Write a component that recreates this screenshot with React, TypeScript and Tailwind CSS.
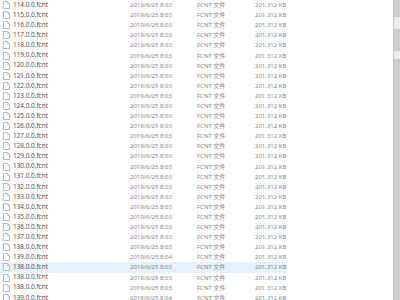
import React from 'react';

type FileRow = {
  name: string;
  time: string;
  selected?: boolean;
};

const rows: FileRow[] = [
  ...Array.from({ length: 26 }, (_, i) => ({
    name: `${114 + i}.0.0.fcnt`,
    time: 114 + i === 139 ? '2019/6/25 8:04' : '2019/6/25 8:03',
  })),
  { name: '138.0.0.fcnt', time: '2019/6/25 8:03', selected: true },
  { name: '138.0.0.fcnt', time: '2019/6/25 8:03' },
  { name: '138.0.0.fcnt', time: '2019/6/25 8:03' },
  { name: '139.0.0.fcnt', time: '2019/6/25 8:04' },
];

const FileIcon = () => (
  <svg width="7" height="8" viewBox="0 0 7 8" className="shrink-0">
    <path d="M0.5 0.5 H4.5 L6.5 2.5 V7.5 H0.5 Z" fill="#fff" stroke="#b4b4b4" strokeWidth="1" />
    <path d="M4.5 0.5 V2.5 H6.5" fill="none" stroke="#cfcfcf" strokeWidth="1" />
  </svg>
);

const App: React.FC = () => {
  return (
    <div
      className="flex w-[400px] h-[300px] overflow-hidden bg-white"
      style={{ fontFamily: '"Noto Sans", "Noto Sans CJK SC", sans-serif' }}
    >
      <div className="flex-1 flex flex-col">
        {rows.map((row, i) => (
          <div
            key={i}
            className={`flex items-center h-[10.1px] shrink-0 w-[287px] ${row.selected ? 'bg-[#e5f1fb]' : ''}`}
          >
            <div className="w-[13px] pl-[3px] flex items-center">
              <FileIcon />
            </div>
            <div className="w-[117px] text-[6.4px] leading-none text-[#505050]">{row.name}</div>
            <div className="w-[67px] text-[6px] leading-none text-[#858585]">{row.time}</div>
            <div className="w-[58px] text-[6px] leading-none text-[#858585]">FCNT 文件</div>
            <div className="text-[6px] leading-none text-[#858585]">201,312 KB</div>
          </div>
        ))}
      </div>
      <div className="w-[7px] flex flex-col bg-[#cdcdcd] border-l border-[#c2c2c2]">
        <div className="h-[17px]" />
        <div className="h-[12px] bg-[#ececec]" />
        <div className="h-[22px]" />
        <div className="h-[8px] bg-[#ececec]" />
      </div>
    </div>
  );
};

export default App;
